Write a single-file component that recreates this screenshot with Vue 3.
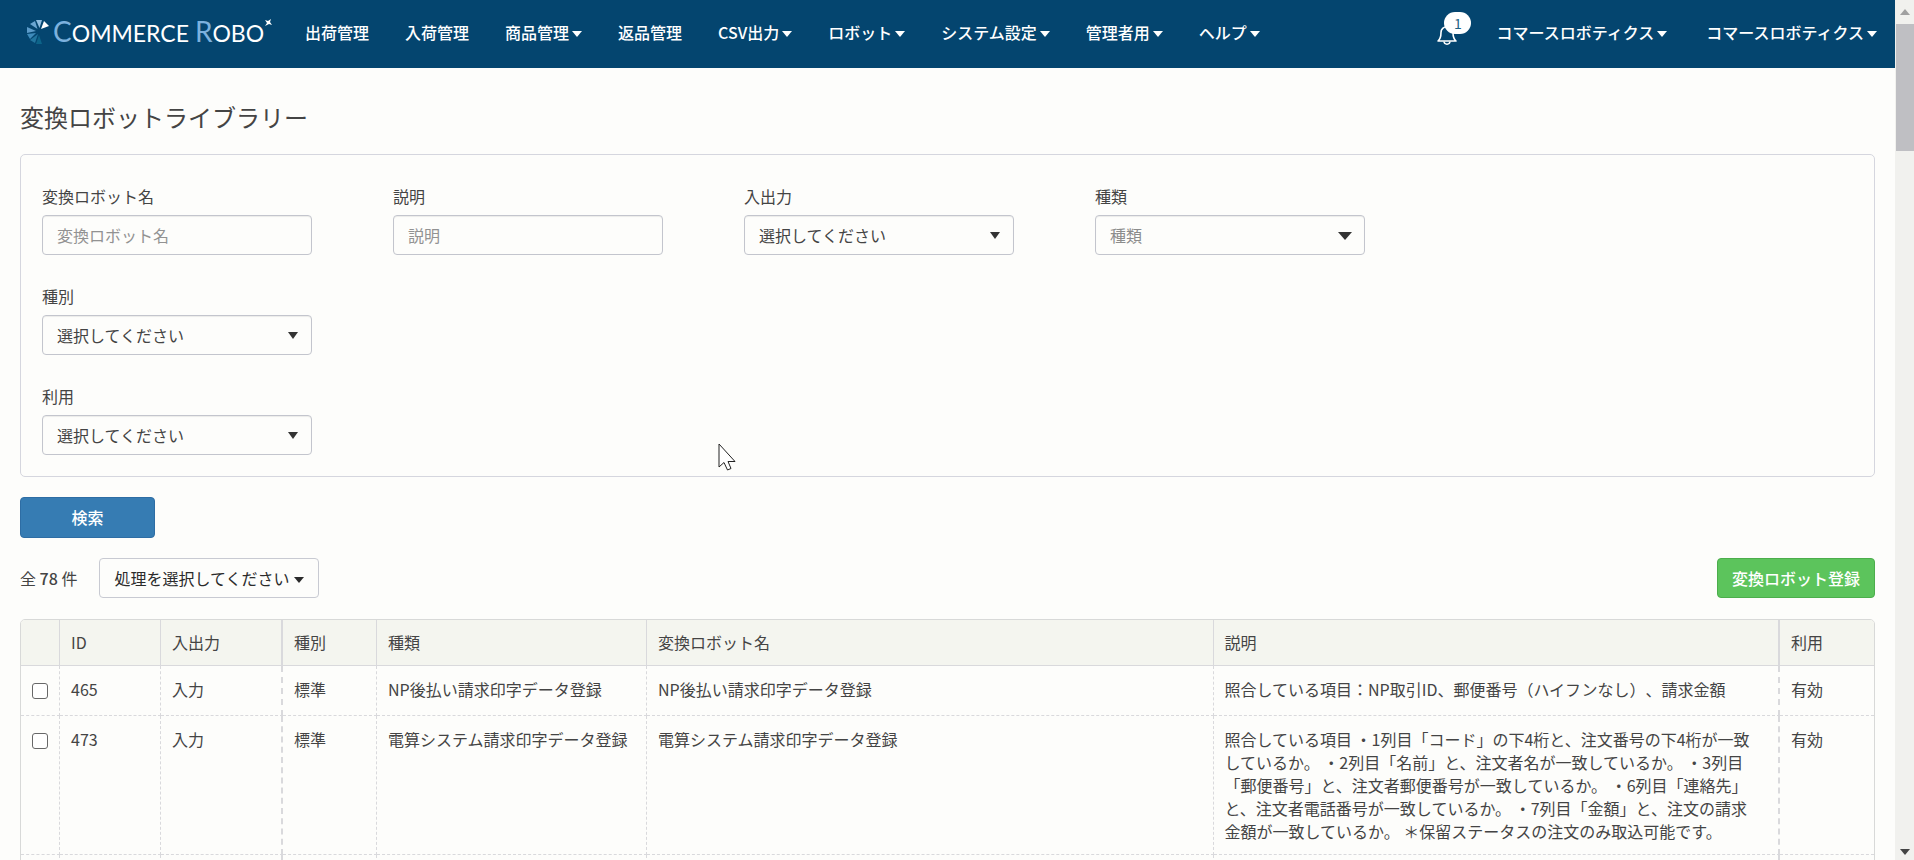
<script setup>
import { ref } from 'vue'

const menu = [
  { label: '出荷管理' },
  { label: '入荷管理' },
  { label: '商品管理', more: true },
  { label: '返品管理' },
  { label: 'CSV出力', more: true },
  { label: 'ロボット', more: true },
  { label: 'システム設定', more: true },
  { label: '管理者用', more: true },
  { label: 'ヘルプ', more: true },
]
const accounts = ['コマースロボティクス', 'コマースロボティクス']

const fields = [
  { id: 'name', label: '変換ロボット名', type: 'text', row: 1 },
  { id: 'desc', label: '説明', type: 'text', row: 1 },
  { id: 'io', label: '入出力', type: 'select', row: 1 },
  { id: 'kind', label: '種類', type: 'combo', row: 1 },
  { id: 'class', label: '種別', type: 'select', row: 2 },
  { id: 'use', label: '利用', type: 'select', row: 3 },
]

const rows = ref([
  {
    id: '465', io: '入力', cls: '標準', kind: 'NP後払い請求印字データ登録', name: 'NP後払い請求印字データ登録',
    desc: '照合している項目：NP取引ID、郵便番号（ハイフンなし）、請求金額', use: '有効', checked: false,
  },
  {
    id: '473', io: '入力', cls: '標準', kind: '電算システム請求印字データ登録', name: '電算システム請求印字データ登録',
    desc: '照合している項目 ・1列目「コード」の下4桁と、注文番号の下4桁が一致しているか。 ・2列目「名前」と、注文者名が一致しているか。 ・3列目「郵便番号」と、注文者郵便番号が一致しているか。 ・6列目「連絡先」と、注文者電話番号が一致しているか。 ・7列目「金額」と、注文の請求金額が一致しているか。 ＊保留ステータスの注文のみ取込可能です。',
    use: '有効', checked: false,
  },
])
</script>

<template>
  <div class="window">
    <div class="page">
      <header class="navbar">
        <a class="brand" href="#">
          <svg class="mark" width="24" height="26" viewBox="0 0 24 26" aria-hidden="true">
            <path d="M9 1 L15 1 L12.500 9 Z" fill="#8fbde0" />
            <path d="M3 5 L8 2 L10.500 10 Z" fill="#6ba6d2" />
            <path d="M0 8 L0 14 L9 12 Z" fill="#5c9bc9" />
            <path d="M0 15 L3 20 L9 14 Z" fill="#3f8bbb" />
            <path d="M3 21 L8 24 L11 15 Z" fill="#22759f" />
            <path d="M9 25 L15 25 L12 16 Z" fill="#0d6489" />
            <path d="M17 2 L22 7 L14 10 Z" fill="#ffffff" />
          </svg>
          <span class="wordmark"><b>C</b>OMMERCE <b>R</b>OBO</span>
          <svg class="spark" width="9" height="9" viewBox="0 0 9 9" aria-hidden="true">
            <path d="M1 2 L4 3 L7 1 L6 4 L8 7 L5 6 L1 8 L3 5 Z" fill="#fff" />
          </svg>
        </a>
        <nav class="menu">
          <a v-for="m in menu" :key="m.label" href="#">{{ m.label }}<i v-if="m.more" class="caret"></i></a>
        </nav>
        <div class="account">
          <button class="bell" type="button" aria-label="通知">
            <svg width="20" height="20" viewBox="0 0 20 20" aria-hidden="true">
              <path d="M1 16 C3.500 14 4 11 4 7.500 C4 4 6.500 1.800 10 1.800 C13.500 1.800 16 4 16 7.500 C16 11 16.500 14 19 16 Z" fill="none" stroke="#fff" stroke-width="1.600" stroke-linejoin="round" />
              <path d="M7 16.500 C7.300 20 12.700 20 13 16.500" fill="none" stroke="#fff" stroke-width="1.500" />
            </svg>
            <span class="badge">1</span>
          </button>
          <a v-for="(a, i) in accounts" :key="i" href="#">{{ a }}<i class="caret"></i></a>
        </div>
      </header>

      <main>
        <h1>変換ロボットライブラリー</h1>
        <form class="panel" @submit.prevent>
          <div v-for="r in 3" :key="r" class="fields">
            <div v-for="f in fields.filter((x) => x.row === r)" :key="f.id" class="field">
              <label :for="f.id">{{ f.label }}</label>
              <input v-if="f.type === 'text'" :id="f.id" class="control" type="text" :placeholder="f.label" />
              <div v-else class="pick" :class="f.type">
                <select :id="f.id" class="control">
                  <option>{{ f.type === 'combo' ? f.label : '選択してください' }}</option>
                </select>
              </div>
            </div>
          </div>
        </form>

        <button class="btn search" type="button">検索</button>

        <div class="toolbar">
          <span class="total">全 <b>78</b> 件</span>
          <button class="btn action" type="button">処理を選択してください<i class="caret"></i></button>
          <button class="btn create" type="button">変換ロボット登録</button>
        </div>

        <div class="grid">
          <table>
            <colgroup>
              <col class="c-check" /><col class="c-id" /><col class="c-io" /><col class="c-cls" />
              <col class="c-kind" /><col /><col /><col class="c-use" />
            </colgroup>
            <thead>
              <tr>
                <th></th><th>ID</th><th class="thick">入出力</th><th>種別</th><th>種類</th>
                <th>変換ロボット名</th><th class="thick">説明</th><th>利用</th>
              </tr>
            </thead>
            <tbody>
              <tr v-for="r in rows" :key="r.id">
                <td class="check"><input v-model="r.checked" type="checkbox" :aria-label="r.id" /></td>
                <td>{{ r.id }}</td>
                <td class="thick">{{ r.io }}</td>
                <td>{{ r.cls }}</td>
                <td>{{ r.kind }}</td>
                <td>{{ r.name }}</td>
                <td class="thick desc">{{ r.desc }}</td>
                <td>{{ r.use }}</td>
              </tr>
              <tr>
                <td></td><td></td><td class="thick"></td><td></td><td></td><td></td><td class="thick"></td><td></td>
              </tr>
            </tbody>
          </table>
        </div>
      </main>
    </div>

    <div class="scrollbar" aria-hidden="true">
      <i class="up"></i>
      <div class="track"><div class="thumb"></div></div>
      <i class="down"></i>
    </div>

    <svg class="pointer" width="18" height="29" viewBox="0 0 18 29" aria-hidden="true">
      <path d="M1 1 V24 L6 19.500 L9.500 27 L13 25.500 L10 18.500 H17 Z" fill="#fff" stroke="#222" stroke-width="1" />
    </svg>
  </div>
</template>

<style>
html,
body {
  margin: 0;
  overflow: hidden;
}
</style>

<style scoped>
* {
  box-sizing: border-box;
}
.window {
  position: relative;
  display: flex;
  height: 100vh;
  overflow: hidden;
  background: #fdfdfb;
  color: #444;
  font: 16px/23px "Noto Sans CJK JP", sans-serif;
  text-spacing-trim: space-all;
}
.page {
  flex: 1;
  min-width: 0;
  overflow: hidden;
}
a {
  color: inherit;
  text-decoration: none;
}
button,
input,
select {
  font: inherit;
  color: inherit;
}
.caret {
  display: inline-block;
  margin-left: 3px;
  vertical-align: 2px;
  border: 5px solid transparent;
  border-top: 6px solid currentColor;
  border-bottom: 0;
}

.navbar {
  display: flex;
  align-items: center;
  height: 68px;
  padding: 0 18px 4px 27px;
  background: #04456f;
  color: #fff;
  font-weight: 500;
  white-space: nowrap;
}
.brand {
  display: flex;
  align-items: center;
  width: 260px;
}
.wordmark {
  margin-left: 2px;
  font: 23px/34px Lato, sans-serif;
}
.wordmark b {
  font-size: 28px;
  font-weight: 400;
  color: #7cb1de;
}
.spark {
  align-self: flex-start;
  margin-top: 4px;
}
.menu {
  display: flex;
  gap: 36px;
  margin-left: 18px;
}
.account {
  display: flex;
  align-items: center;
  gap: 39px;
  margin-left: auto;
}
.bell {
  position: relative;
  width: 20px;
  height: 20px;
  margin-top: 6px;
  padding: 0;
  border: 0;
  background: none;
}
.bell svg {
  display: block;
}
.badge {
  position: absolute;
  left: 7px;
  top: -13px;
  width: 27px;
  height: 22px;
  border-radius: 11px;
  background: #fff;
  color: #1d6285;
  font-size: 14px;
  font-weight: 400;
  line-height: 22px;
}

main {
  padding: 32px 20px 0;
}
h1 {
  margin: 0 0 20px;
  font-size: 24px;
  line-height: 34px;
  font-weight: 400;
}
.panel {
  display: grid;
  gap: 30px;
  padding: 30px 21px 21px;
  border: 1px solid #d5d6de;
  border-radius: 5px;
}
.fields {
  display: grid;
  grid-template-columns: repeat(4, minmax(0, 270px));
  column-gap: 81px;
}
.field label {
  display: block;
  margin-bottom: 7px;
}
.control {
  display: block;
  width: 100%;
  height: 40px;
  padding: 0 14px;
  border: 1px solid #c3c5cd;
  border-radius: 4px;
  background: #fdfdfb;
  box-shadow: inset 0 1px 1px rgba(0, 0, 0, 0.07);
  appearance: none;
}
.control::placeholder {
  color: #929292;
  opacity: 1;
}
.pick {
  position: relative;
}
.pick::after {
  content: "";
  position: absolute;
  right: 14px;
  top: 17px;
  border: 5px solid transparent;
  border-top: 7px solid #333;
  border-bottom: 0;
}
.combo select {
  color: #8c8c8c;
}
.combo::after {
  right: 13px;
  border-width: 8px 7px 0;
}

.btn {
  height: 40px;
  padding: 0 14px;
  border: 1px solid #c8cad2;
  border-radius: 4px;
  background: #fdfdfb;
  white-space: nowrap;
}
.search {
  display: block;
  width: 135px;
  height: 41px;
  margin: 20px 0;
  border-color: #2e6da4;
  background: #367cb3;
  color: #fff;
  font-weight: 500;
}
.toolbar {
  display: flex;
  align-items: center;
  margin-bottom: 21px;
}
.total {
  margin-right: 22px;
}
.total b {
  font-weight: 500;
}
.action {
  color: #2b2b2b;
}
.action .caret {
  margin-left: 5px;
}
.create {
  margin-left: auto;
  border-color: #4cae4c;
  background: #5cc45c;
  color: #fff;
  font-weight: 500;
}

.grid {
  overflow: hidden;
  border: 1px solid #d8d9d8;
  border-radius: 5px 5px 0 0;
}
table {
  width: 100%;
  table-layout: fixed;
  border-spacing: 0;
}
.c-check { width: 39px; }
.c-id { width: 101px; }
.c-io { width: 122px; }
.c-cls { width: 94px; }
.c-kind { width: 270px; }
.c-use { width: 94px; }
th,
td {
  padding: 12px 11px 11px;
  border: 0 solid #d9d9dc;
  border-right-width: 1px;
  border-bottom-width: 1px;
  text-align: left;
  vertical-align: top;
  font-weight: 400;
}
th {
  height: 46px;
  padding: 11px;
  background: #f4f5ef;
}
td {
  height: 50px;
  border-style: dashed;
}
.desc {
  padding-right: 22px;
}
.thick {
  border-right-width: 2px;
}
th:last-child,
td:last-child {
  border-right: 0;
}
.check input {
  display: block;
  width: 16px;
  height: 16px;
  margin: 5px 0 0;
  border: 1px solid #686868;
  border-radius: 3px;
  background: #fff;
  appearance: none;
}

.scrollbar {
  display: flex;
  flex-direction: column;
  align-items: center;
  width: 19px;
  padding: 9px 0 5px;
  background: #f1f1ee;
}
.up,
.down {
  border: 5px solid transparent;
}
.up {
  border-top: 0;
  border-bottom: 6px solid #a0a0a0;
}
.down {
  border-bottom: 0;
  border-top: 6px solid #444;
}
.track {
  flex: 1;
  width: 100%;
  padding: 9px 0 0 1px;
}
.thumb {
  height: 127px;
  background: #bfbfc3;
}
.pointer {
  position: absolute;
  left: 718px;
  top: 443px;
}
</style>
